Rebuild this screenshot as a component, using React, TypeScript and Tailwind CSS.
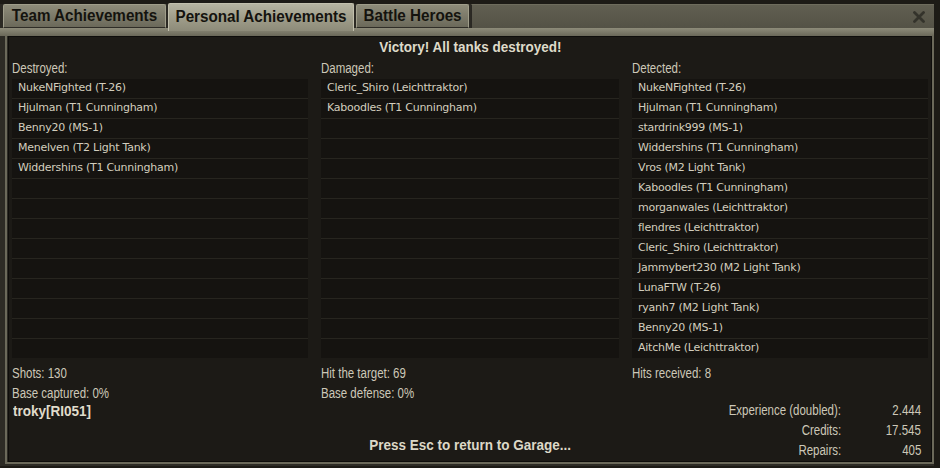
import React from "react";

const destroyed = [
  "NukeNFighted (T-26)",
  "Hjulman (T1 Cunningham)",
  "Benny20 (MS-1)",
  "Menelven (T2 Light Tank)",
  "Widdershins (T1 Cunningham)",
];

const damaged = ["Cleric_Shiro (Leichttraktor)", "Kaboodles (T1 Cunningham)"];

const detected = [
  "NukeNFighted (T-26)",
  "Hjulman (T1 Cunningham)",
  "stardrink999 (MS-1)",
  "Widdershins (T1 Cunningham)",
  "Vros (M2 Light Tank)",
  "Kaboodles (T1 Cunningham)",
  "morganwales (Leichttraktor)",
  "flendres (Leichttraktor)",
  "Cleric_Shiro (Leichttraktor)",
  "Jammybert230 (M2 Light Tank)",
  "LunaFTW (T-26)",
  "ryanh7 (M2 Light Tank)",
  "Benny20 (MS-1)",
  "AitchMe (Leichttraktor)",
];

// narrow look: Arial metrics squeezed sideways
const Narrow = ({
  children,
  side = "left",
  bold,
}: {
  children: React.ReactNode;
  side?: "left" | "right" | "center";
  bold?: boolean;
}) => {
  const origin =
    side === "left" ? "origin-left" : side === "right" ? "origin-right" : "origin-center";
  const squeeze = bold ? "scale-x-[0.9]" : "scale-x-[0.82]";
  return <span className={`inline-block whitespace-nowrap ${squeeze} ${origin}`}>{children}</span>;
};

const TankList = ({ items }: { items: string[] }) => {
  const rows = Array.from({ length: 14 }, (_, i) => items[i] ?? "");
  return (
    <div className="flex flex-col gap-px bg-[#27251f]">
      {rows.map((r, i) => (
        <div
          key={i}
          className="h-[19px] bg-[#151310] pl-[6px] flex items-center font-[DejaVu_Sans,sans-serif] text-[11px] tracking-[-0.25px] text-[#d3cebe] whitespace-nowrap"
        >
          {r}
        </div>
      ))}
    </div>
  );
};

const Tab = ({ label, active }: { label: string; active?: boolean }) => {
  const text = (
    <span className="inline-block whitespace-nowrap origin-center scale-x-[0.95]">{label}</span>
  );
  if (active) {
    return (
      <div className="relative z-10 -mb-[3px] h-[28px] w-[186px] pb-[2px] flex items-center justify-center rounded-t-[2px] border-t border-x border-[#c2c0ad] bg-gradient-to-b from-[#b6b4a1] via-[#a09e8b] to-[#8d8b79] font-bold text-[16px] text-[#14130e]">
        {text}
      </div>
    );
  }
  return (
    <div
      className={`h-[24px] flex items-center justify-center rounded-t-[2px] border-t border-x border-[#9f9d8a] border-b border-b-[#2f2d27] bg-gradient-to-b from-[#8e8c7a] to-[#6b695a] font-bold text-[16px] text-[#14130e] ${
        label === "Team Achievements" ? "w-[163px]" : "w-[113px]"
      }`}
    >
      {text}
    </div>
  );
};

const App = () => {
  return (
    <div className="w-[940px] h-[468px] overflow-hidden bg-[#1d1b16] font-[Liberation_Sans,Arial,sans-serif]">
      <div className="mt-[4px] w-[934px] h-[462px] flex flex-col">
        {/* tab strip */}
        <div className="h-[24px] flex items-end bg-[#2c2a24] pl-[3px] gap-[2px]">
          <Tab label="Team Achievements" />
          <Tab label="Personal Achievements" active />
          <Tab label="Battle Heroes" />
          <div className="flex-1 h-[24px] flex items-center justify-end pr-[9px] border-l border-[#2a2823] border-t border-t-[#6e6c5d] bg-gradient-to-b from-[#615f51] to-[#545246]">
            <svg width="12" height="12" viewBox="0 0 12 12">
              <path d="M1.5 1.5 L10.5 10.5 M10.5 1.5 L1.5 10.5" stroke="#34332b" strokeWidth="2.8" strokeLinecap="round" />
            </svg>
          </div>
        </div>
        {/* light band under tabs */}
        <div className="h-[8px] bg-gradient-to-b from-[#8e8c7a] to-[#6a6859]" />
        {/* body */}
        <div className="flex-1 flex pl-[5px] pb-[2px] bg-[#2d2b25]">
          <div className="flex-1 flex border-x-2 border-b-2 border-[#6b695a] pl-[1px]">
            <div className="flex-1 flex flex-col border border-[#0e0d0b] bg-[#1c1a16]">
              <div className="h-[20px] flex items-center justify-center font-bold text-[15px] text-[#dedac9]">
                <Narrow side="center" bold>
                  Victory! All tanks destroyed!
                </Narrow>
              </div>
              <div className="grid grid-cols-[296px_298px_296px] gap-x-[13px] pl-[3px] text-[14px] text-[#cdc8b8]">
                {/* destroyed */}
                <div className="flex flex-col">
                  <div className="h-[22px] flex items-center">
                    <Narrow>Destroyed:</Narrow>
                  </div>
                  <TankList items={destroyed} />
                  <div className="mt-[5px] h-[20px] flex items-center">
                    <Narrow>Shots: 130</Narrow>
                  </div>
                  <div className="h-[20px] flex items-center">
                    <Narrow>Base captured: 0%</Narrow>
                  </div>
                  <div className="h-[16px] flex items-center pl-[1px] font-bold text-[15px] text-[#e0dccb]">
                    <Narrow bold>troky[RI051]</Narrow>
                  </div>
                </div>
                {/* damaged */}
                <div className="flex flex-col">
                  <div className="h-[22px] flex items-center">
                    <Narrow>Damaged:</Narrow>
                  </div>
                  <TankList items={damaged} />
                  <div className="mt-[5px] h-[20px] flex items-center">
                    <Narrow>Hit the target: 69</Narrow>
                  </div>
                  <div className="h-[20px] flex items-center">
                    <Narrow>Base defense: 0%</Narrow>
                  </div>
                  <div className="mt-[32px] h-[20px] flex items-center justify-center font-bold text-[15px] text-[#dcd8c7]">
                    <Narrow side="center" bold>
                      Press Esc to return to Garage...
                    </Narrow>
                  </div>
                </div>
                {/* detected */}
                <div className="flex flex-col">
                  <div className="h-[22px] flex items-center">
                    <Narrow>Detected:</Narrow>
                  </div>
                  <TankList items={detected} />
                  <div className="mt-[5px] h-[20px] flex items-center">
                    <Narrow>Hits received: 8</Narrow>
                  </div>
                  <div className="mt-[17px] flex flex-col pr-[7px]">
                    {[
                      ["Experience (doubled):", "2.444"],
                      ["Credits:", "17.545"],
                      ["Repairs:", "405"],
                    ].map(([k, v]) => (
                      <div key={k} className="h-[20px] flex items-center justify-end">
                        <span className="text-right">
                          <Narrow side="right">{k}</Narrow>
                        </span>
                        <span className="w-[80px] text-right">
                          <Narrow side="right">{v}</Narrow>
                        </span>
                      </div>
                    ))}
                  </div>
                </div>
              </div>
            </div>
          </div>
        </div>
      </div>
    </div>
  );
};

export default App;
